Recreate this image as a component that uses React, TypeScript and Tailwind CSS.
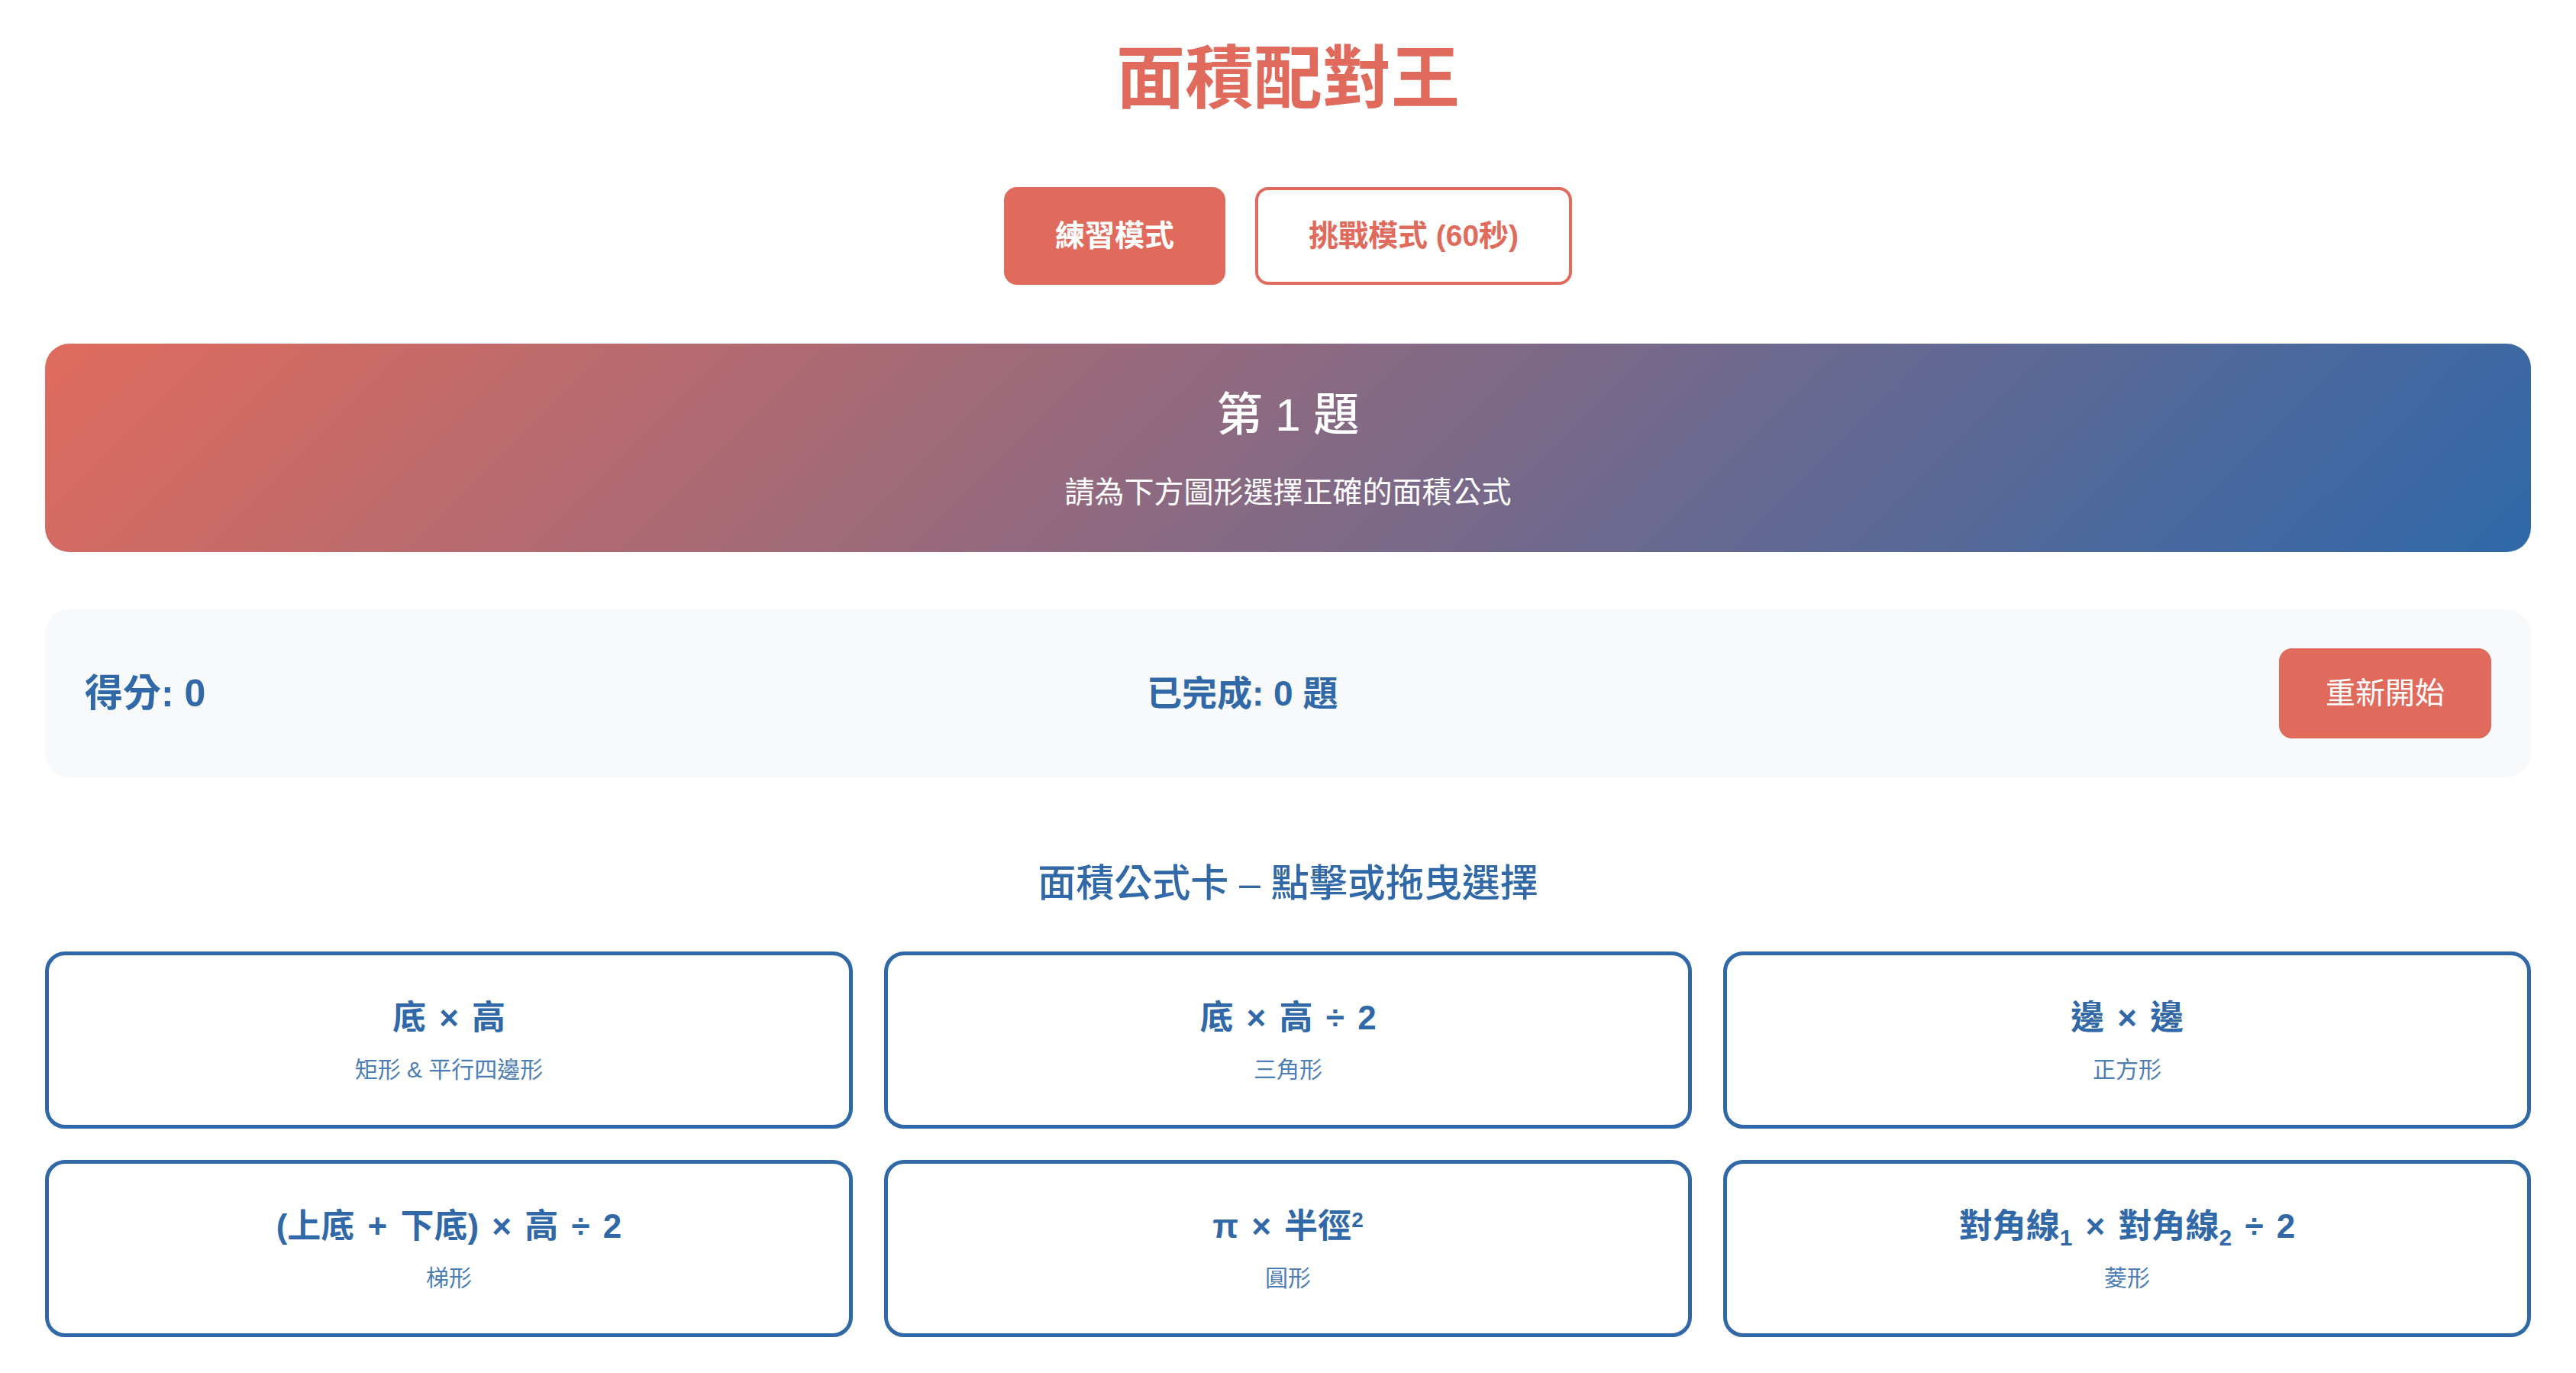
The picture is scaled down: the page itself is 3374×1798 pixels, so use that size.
import type { ReactNode } from "react";

const Sub = ({ children }: { children: ReactNode }) => (
  <span className="relative top-[10px] text-[30px] leading-[0] font-bold">{children}</span>
);

const formulas: { formula: ReactNode; shape: string }[] = [
  { formula: "底 × 高", shape: "矩形 & 平行四邊形" },
  { formula: "底 × 高 ÷ 2", shape: "三角形" },
  { formula: "邊 × 邊", shape: "正方形" },
  { formula: "(上底 + 下底) × 高 ÷ 2", shape: "梯形" },
  {
    formula: (
      <>
        π × 半徑<span className="relative top-[-14px] text-[28px] leading-[0] font-bold">2</span>
      </>
    ),
    shape: "圓形",
  },
  {
    formula: (
      <>
        對角線<Sub>1</Sub> × 對角線<Sub>2</Sub> ÷ 2
      </>
    ),
    shape: "菱形",
  },
];

export default function App() {
  return (
    <div className="min-h-screen bg-white px-[59px] pt-[49px] font-['Liberation_Sans','Noto_Sans_CJK_TC',sans-serif]">
      <h1 className="text-center text-[90px] font-bold leading-[108px] text-[#e06b5d]">面積配對王</h1>

      <div className="mt-[88px] flex justify-center gap-[39px]">
        <button className="h-[128px] w-[290px] rounded-[17px] bg-[#e06b5d] text-[39px] font-bold text-white">
          練習模式
        </button>
        <button className="h-[128px] w-[415px] rounded-[17px] border-[4px] border-[#e06b5d] bg-white text-[39px] font-bold text-[#e06b5d]">
          挑戰模式 (60秒)
        </button>
      </div>

      <div className="mt-[77px] flex h-[273px] flex-col items-center justify-center rounded-[32px] bg-[linear-gradient(135deg,#e06b5d,#2f68a9)] text-white">
        <h2 className="text-[60px] font-medium leading-[90px]">第 1 題</h2>
        <p className="mt-[27px] text-[39px] leading-[58px]">請為下方圖形選擇正確的面積公式</p>
      </div>

      <div className="mt-[75px] flex h-[220px] items-center justify-between rounded-[32px] bg-[#f7f9fb] px-[52px]">
        <div className="text-[50px] font-bold text-[#3068a8]">得分: 0</div>
        <div className="text-[46px] font-bold text-[#3068a8]">已完成: 0 題</div>
        <button className="h-[118px] w-[278px] rounded-[17px] bg-[#e06b5d] text-[39px] text-white">重新開始</button>
      </div>

      <h3 className="mt-[102px] text-center text-[50px] font-medium leading-[75px] text-[#3068a8]">
        面積公式卡 – 點擊或拖曳選擇
      </h3>

      <div className="mt-[51px] grid grid-cols-3 gap-[41px]">
        {formulas.map((f) => (
          <div
            key={f.shape}
            className="flex h-[232px] flex-col items-center justify-center rounded-[26px] border-[5px] border-[#3068a8] bg-white"
          >
            <div className="text-[44px] font-bold leading-[64px] text-[#3068a8] [word-spacing:5px]">
              {f.formula}
            </div>
            <div className="mt-[13px] text-[30px] leading-[45px] text-[#4d7db5]">{f.shape}</div>
          </div>
        ))}
      </div>
    </div>
  );
}
